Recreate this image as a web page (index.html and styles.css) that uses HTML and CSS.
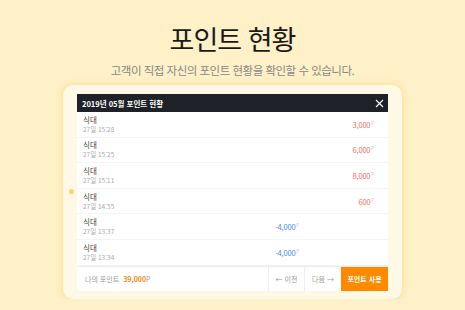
FILE: index.html
```html
<!DOCTYPE html>
<html lang="ko">
<head>
    <meta charset="UTF-8">
    <meta name="viewport" content="width=device-width, initial-scale=1.0">
    <title>포인트 현황</title>
    <link rel="stylesheet" href="styles.css">
</head>
<body>
<header class="hero">
    <h1>포인트 현황</h1>
    <p>고객이 직접 자신의 포인트 현황을 확인할 수 있습니다.</p>
</header>
<div class="card">
    <span class="dot"></span>
    <div class="panel">
        <div class="panel-head">
            <span>2019년 05월 포인트 현황</span>
            <svg class="close" width="9" height="9" viewBox="0 0 9 9"><path d="M1 1L8 8M8 1L1 8" stroke="#fff" stroke-width="1.1"/></svg>
        </div>
        <div class="row">
            <div class="info"><b>식대</b><small>27일 15:28</small></div>
            <div class="minus"></div>
            <div class="plus">3,000<sup>P</sup></div>
        </div>
        <div class="row">
            <div class="info"><b>식대</b><small>27일 15:25</small></div>
            <div class="minus"></div>
            <div class="plus">6,000<sup>P</sup></div>
        </div>
        <div class="row">
            <div class="info"><b>식대</b><small>27일 15:11</small></div>
            <div class="minus"></div>
            <div class="plus">8,000<sup>P</sup></div>
        </div>
        <div class="row">
            <div class="info"><b>식대</b><small>27일 14:55</small></div>
            <div class="minus"></div>
            <div class="plus">600<sup>P</sup></div>
        </div>
        <div class="row">
            <div class="info"><b>식대</b><small>27일 13:37</small></div>
            <div class="minus">-4,000<sup>P</sup></div>
            <div class="plus"></div>
        </div>
        <div class="row">
            <div class="info"><b>식대</b><small>27일 13:34</small></div>
            <div class="minus">-4,000<sup>P</sup></div>
            <div class="plus"></div>
        </div>
        <div class="panel-foot">
            <div class="my-point">나의 포인트&nbsp;<strong>39,000</strong>P</div>
            <a class="page-btn prev">&larr; 이전</a>
            <a class="page-btn next">다음 &rarr;</a>
            <a class="use-btn">포인트 사용</a>
        </div>
    </div>
</div>
</body>
</html>
```

FILE: styles.css
```css
body { font-family: "Noto Sans CJK KR", "Noto Sans", sans-serif; background-color: #fef0c7; color: #222; margin: 0; padding: 0; }
.hero { text-align: center; padding-top: 22px; }
.hero h1 { margin: 0; font-size: 27px; font-weight: 400; line-height: 34px; letter-spacing: -1px; color: #1a1a1a; }
.hero p { margin: 7px 0 0; font-size: 11.5px; line-height: 14px; color: #888; letter-spacing: -0.5px; }

.card { position: relative; width: 311px; margin: 8px auto 0; padding: 9px 14px 8px; background: #fef8e6; border-radius: 10px; box-shadow: 0 0 5px 2px rgba(252, 214, 120, 0.45); }
.dot { position: absolute; left: 6px; top: 104px; width: 5px; height: 5px; border-radius: 50%; background: #fcd46a; }

.panel { background: #fff; }
.panel-head { display: flex; align-items: center; justify-content: space-between; height: 18px; padding: 0 4px 0 5px; background: #1e2128; color: #fff; font-size: 7.5px; font-weight: 700; }
.close { display: block; }

.row { display: grid; grid-template-columns: 1fr 85px 75px; align-items: center; height: 25.6px; padding: 0 14px 0 6px; border-bottom: 1px solid #f4f4f4; box-sizing: border-box; }
.info b { display: block; font-size: 7.5px; font-weight: 400; color: #444; line-height: 10px; }
.info small { display: block; font-size: 6.5px; color: #aaa; line-height: 9px; }
.minus, .plus { text-align: right; font-size: 7.5px; letter-spacing: -0.2px; }
.minus { color: #4a8cf2; }
.plus { color: #f0705c; }
sup { font-size: 4.5px; color: #bbb; vertical-align: 3px; margin-left: 1px; }

.panel-foot { display: flex; align-items: stretch; height: 24px; border-top: 1px solid #ececec; font-size: 7px; }
.my-point { flex: 1; display: flex; align-items: center; padding-left: 8px; color: #999; }
.my-point strong { color: #f28a10; font-weight: 700; margin-left: 2px; }
.page-btn { display: flex; align-items: center; justify-content: center; border-left: 1px solid #efefef; color: #999; }
.prev { width: 35px; }
.next { width: 36px; }
.use-btn { display: flex; align-items: center; justify-content: center; width: 47px; background: #ff8a00; color: #fff; font-weight: 700; }
```
